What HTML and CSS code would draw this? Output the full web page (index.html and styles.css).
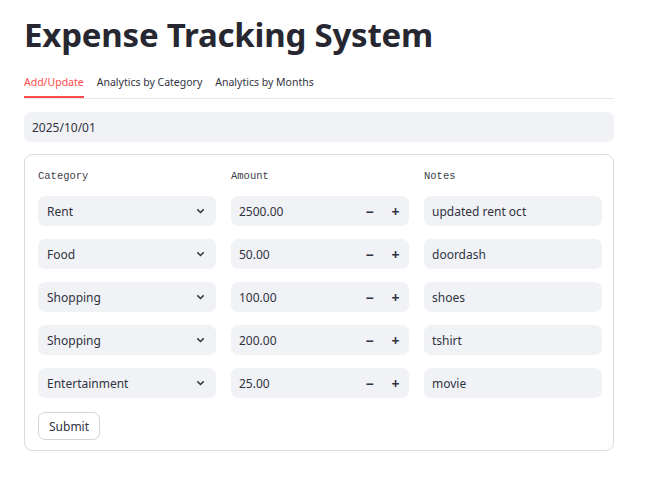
FILE: index.html
```html
<!DOCTYPE html>
<html>
<head>
<meta charset="utf-8">
<link rel="stylesheet" href="styles.css">
</head>
<body>
<main class="app">
  <h1 class="title">Expense Tracking System</h1>
  <nav class="tabs">
    <span class="tab active">Add/Update</span>
    <span class="tab">Analytics by Category</span>
    <span class="tab">Analytics by Months</span>
  </nav>
  <div class="date-input">2025/10/01</div>
  <form class="form">
    <div class="grid">
      <div class="head">Category</div>
      <div class="head">Amount</div>
      <div class="head">Notes</div>

      <div class="field select"><span>Rent</span><svg class="chev" viewBox="0 0 10 6"><path d="M1.5 1.2 5 4.6 8.5 1.2"/></svg></div>
      <div class="field number"><span>2500.00</span><span class="steps"><b>−</b><b>+</b></span></div>
      <div class="field">updated rent oct</div>

      <div class="field select"><span>Food</span><svg class="chev" viewBox="0 0 10 6"><path d="M1.5 1.2 5 4.6 8.5 1.2"/></svg></div>
      <div class="field number"><span>50.00</span><span class="steps"><b>−</b><b>+</b></span></div>
      <div class="field">doordash</div>

      <div class="field select"><span>Shopping</span><svg class="chev" viewBox="0 0 10 6"><path d="M1.5 1.2 5 4.6 8.5 1.2"/></svg></div>
      <div class="field number"><span>100.00</span><span class="steps"><b>−</b><b>+</b></span></div>
      <div class="field">shoes</div>

      <div class="field select"><span>Shopping</span><svg class="chev" viewBox="0 0 10 6"><path d="M1.5 1.2 5 4.6 8.5 1.2"/></svg></div>
      <div class="field number"><span>200.00</span><span class="steps"><b>−</b><b>+</b></span></div>
      <div class="field">tshirt</div>

      <div class="field select"><span>Entertainment</span><svg class="chev" viewBox="0 0 10 6"><path d="M1.5 1.2 5 4.6 8.5 1.2"/></svg></div>
      <div class="field number"><span>25.00</span><span class="steps"><b>−</b><b>+</b></span></div>
      <div class="field">movie</div>
    </div>
    <button type="button" class="submit">Submit</button>
  </form>
</main>
</body>
</html>
```
FILE: styles.css
```css
* { box-sizing: border-box; }
html, body { margin: 0; padding: 0; background: #fff; }
body {
  font-family: "Noto Sans", "Open Sans", sans-serif;
  color: #31333f;
  width: 648px;
  height: 495px;
  overflow: hidden;
}
.app {
  padding: 14px 34px 0 24px;
}
.title {
  margin: 0;
  font-family: "Noto Sans", sans-serif;
  font-weight: 700;
  font-size: 33px;
  line-height: 42px;
  color: #262730;
  letter-spacing: -0.2px;
}
.tabs {
  display: flex;
  gap: 13px;
  margin-top: 19px;
  border-bottom: 1px solid #e6e7eb;
  height: 24px;
}
.tab {
  font-size: 10.5px;
  line-height: 14px;
  color: #31333f;
  position: relative;
}
.tab.active { color: #ff4b4b; }
.tab.active::after {
  content: "";
  position: absolute;
  left: 0; right: 0;
  top: 21px;
  height: 2px;
  background: #ff4b4b;
}
.date-input {
  margin-top: 13px;
  height: 30px;
  background: #f0f2f6;
  border-radius: 7px;
  padding: 0 8px;
  display: flex;
  align-items: center;
  font-size: 12px;
  color: #31333f;
}
.form {
  margin-top: 12px;
  border: 1px solid #dadbdf;
  border-radius: 8px;
  padding: 12px 13px 11px 13px;
  height: 297px;
}
.grid {
  display: grid;
  grid-template-columns: 178px 178px 178px;
  column-gap: 15px;
  row-gap: 13px;
  grid-auto-rows: 30px;
  grid-template-rows: 16px;
}
.head {
  font-family: "Liberation Mono", "DejaVu Sans Mono", monospace;
  font-size: 10.5px;
  color: #3d3f4a;
  align-self: start;
  padding-top: 3px;
  margin-bottom: -4px;
}
.field {
  height: 30px;
  background: #f0f2f6;
  border-radius: 7px;
  padding: 0 8px;
  display: flex;
  align-items: center;
  font-size: 12px;
  color: #31333f;
}
.select { justify-content: space-between; padding: 0 11px 0 9px; }
.chev {
  width: 9px; height: 6px;
  fill: none; stroke: #31333f; stroke-width: 1.6;
}
.number { justify-content: space-between; padding-right: 8px; }
.steps { display: flex; gap: 15px; }
.steps b {
  font-size: 14px;
  font-weight: 700;
  width: 11px;
  text-align: center;
  color: #31333f;
}
.submit {
  margin-top: 14px;
  height: 28px;
  padding: 0 10px;
  background: #fff;
  border: 1px solid #d4d5d9;
  border-radius: 7px;
  font-family: "Noto Sans", sans-serif;
  font-size: 12px;
  color: #31333f;
}
```
